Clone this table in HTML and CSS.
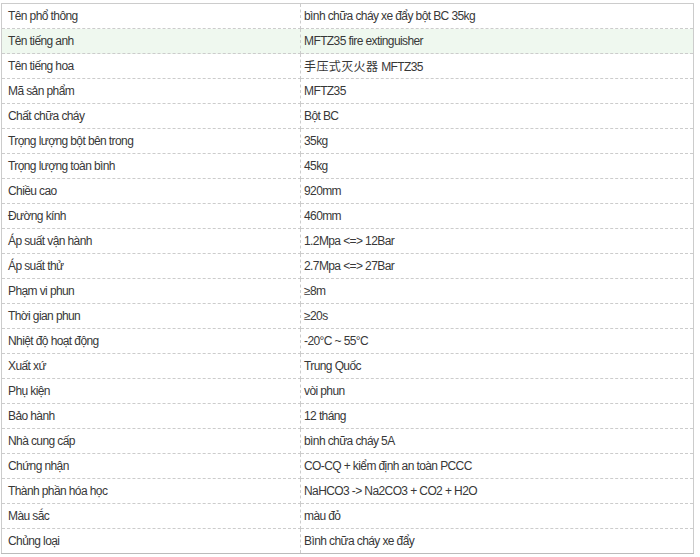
FILE: index.html
```html
<!DOCTYPE html>
<html lang="vi">
<head>
<meta charset="utf-8">
<link rel="stylesheet" href="styles.css">
</head>
<body>
<table class="spec">
<tbody>
<tr><td class="k">Tên phổ thông</td><td class="v">bình chữa cháy xe đẩy bột BC 35kg</td></tr>
<tr class="hl"><td class="k">Tên tiếng anh</td><td class="v">MFTZ35 fire extinguisher</td></tr>
<tr><td class="k">Tên tiếng hoa</td><td class="v"><span class="cjk">手压式灭火器</span> MFTZ35</td></tr>
<tr><td class="k">Mã sản phẩm</td><td class="v">MFTZ35</td></tr>
<tr><td class="k">Chất chữa cháy</td><td class="v">Bột BC</td></tr>
<tr><td class="k">Trọng lượng bột bên trong</td><td class="v">35kg</td></tr>
<tr><td class="k">Trọng lượng toàn bình</td><td class="v">45kg</td></tr>
<tr><td class="k">Chiều cao</td><td class="v">920mm</td></tr>
<tr><td class="k">Đường kính</td><td class="v">460mm</td></tr>
<tr><td class="k">Áp suất vận hành</td><td class="v">1.2Mpa &lt;=&gt; 12Bar</td></tr>
<tr><td class="k">Áp suất thử</td><td class="v">2.7Mpa &lt;=&gt; 27Bar</td></tr>
<tr><td class="k">Phạm vi phun</td><td class="v">≥8m</td></tr>
<tr><td class="k">Thời gian phun</td><td class="v">≥20s</td></tr>
<tr><td class="k">Nhiệt độ hoạt động</td><td class="v">-20°C ~ 55°C</td></tr>
<tr><td class="k">Xuất xứ</td><td class="v">Trung Quốc</td></tr>
<tr><td class="k">Phụ kiện</td><td class="v">vòi phun</td></tr>
<tr><td class="k">Bảo hành</td><td class="v">12 tháng</td></tr>
<tr><td class="k">Nhà cung cấp</td><td class="v">bình chữa cháy 5A</td></tr>
<tr><td class="k">Chứng nhận</td><td class="v">CO-CQ + kiểm định an toàn PCCC</td></tr>
<tr><td class="k">Thành phần hóa học</td><td class="v">NaHCO3 -&gt; Na2CO3 + CO2 + H2O</td></tr>
<tr><td class="k">Màu sắc</td><td class="v">màu đỏ</td></tr>
<tr><td class="k">Chủng loại</td><td class="v">Bình chữa cháy xe đẩy</td></tr>
</tbody>
</table>
</body>
</html>
```
FILE: styles.css
```css
html, body {
  margin: 0;
  padding: 0;
  background: #ffffff;
}
body {
  padding: 3px 0 0 1px;
  font-family: "Liberation Sans", Arial, "Noto Sans CJK SC", sans-serif;
  font-size: 12px;
  letter-spacing: -0.6px;
  color: #383838;
}
.spec {
  width: 693px;
  border-collapse: collapse;
  border: 1px solid #cccccc;
  border-bottom-color: #bbbbbb;
}
.spec td {
  height: 24px;
  padding: 0 0 0 6px;
  border-bottom: 1px dashed #cccccc;
  vertical-align: middle;
  line-height: 14px;
  white-space: nowrap;
}
.spec tr:last-child td {
  border-bottom: 1px solid #bbbbbb;
}
.spec td.k {
  width: 292px;
  border-right: 1px dashed #cccccc;
}
.spec td.v {
  padding-left: 3px;
}
.spec tr.hl td {
  background: #eff8ef;
}
.cjk {
  letter-spacing: 0.4px;
  font-family: "Noto Sans CJK SC", sans-serif;
}
```
